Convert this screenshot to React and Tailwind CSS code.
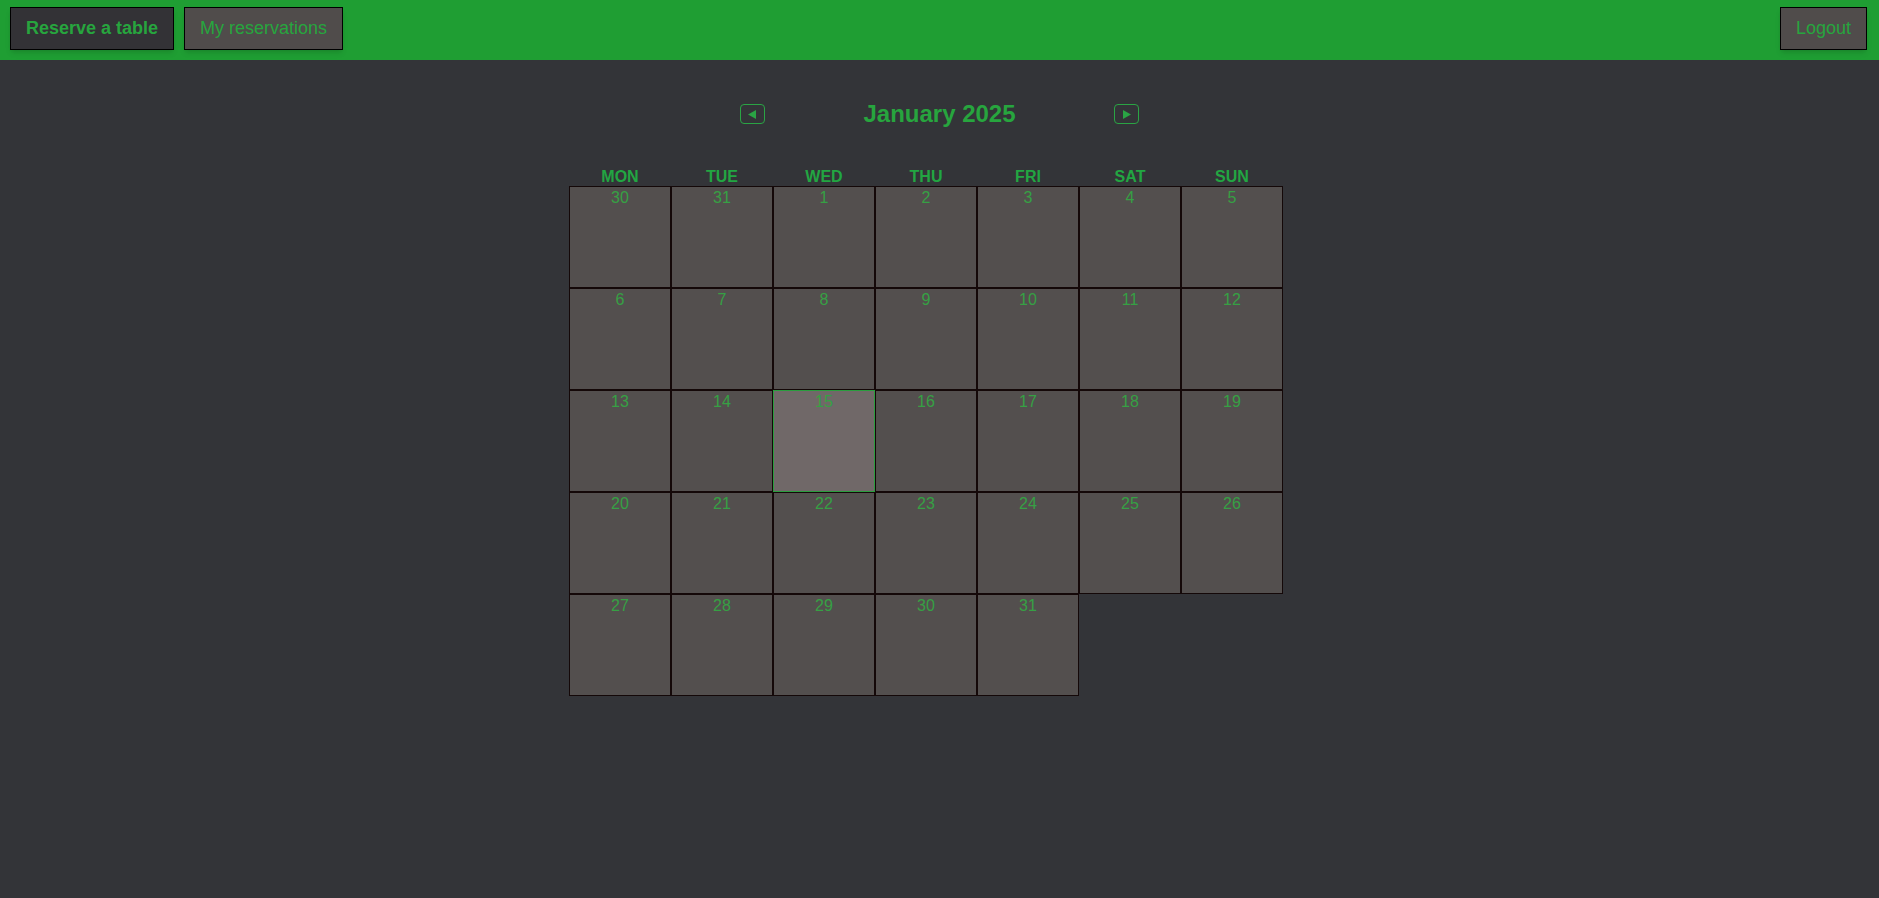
import React from 'react';

const WEEKDAYS = ['MON', 'TUE', 'WED', 'THU', 'FRI', 'SAT', 'SUN'];

function buildDays() {
  const days = [30, 31];
  for (let d = 1; d <= 31; d++) days.push(d);
  return days;
}

function NavArrow({ dir }) {
  return (
    <button className="w-[25px] h-[20px] rounded-[4px] border border-[#2aa444] flex items-center justify-center bg-transparent">
      <svg width="9" height="9" viewBox="0 0 9 9">
        {dir === 'left' ? (
          <polygon points="8,0 8,9 0,4.5" fill="#2aa444" />
        ) : (
          <polygon points="1,0 1,9 9,4.5" fill="#2aa444" />
        )}
      </svg>
    </button>
  );
}

export default function App() {
  const days = buildDays();

  return (
    <div className="min-h-screen bg-[#333438] font-['Liberation_Sans',Arial,sans-serif]">
      {/* Top bar */}
      <header className="h-[60px] bg-[#1f9e33] flex items-start pt-[7px] pl-[10px] pr-[12px]">
        <button className="w-[164px] h-[43px] bg-[#333236] border border-black text-[18px] font-bold text-[#27a53e] shadow-md">
          Reserve a table
        </button>
        <button className="w-[159px] h-[43px] ml-[10px] bg-[#504c4b] border border-black text-[18px] text-[#27a53e] shadow-md">
          My reservations
        </button>
        <button className="w-[87px] h-[43px] ml-auto bg-[#504c4b] border border-black text-[18px] text-[#27a53e] shadow-md">
          Logout
        </button>
      </header>

      {/* Month navigation */}
      <div className="mt-[40px] flex items-center justify-center">
        <NavArrow dir="left" />
        <h1 className="w-[349px] text-center text-[24px] font-bold text-[#27a53e] leading-[28px]">January 2025</h1>
        <NavArrow dir="right" />
      </div>

      {/* Calendar */}
      <div className="w-[741px] mx-auto mt-[39px]">
        <div className="grid grid-cols-[repeat(7,102px)]">
          {WEEKDAYS.map((w) => (
            <div key={w} className="h-[19px] leading-[19px] text-center text-[16px] font-bold text-[#22a642]">
              {w}
            </div>
          ))}
        </div>
        <div className="grid grid-cols-[repeat(7,102px)]">
          {days.map((d, i) => {
            const selected = i === 16;
            return (
              <div
                key={i}
                className={`box-border h-[102px] border pt-[2px] text-center text-[16px] leading-[18px] text-[#36a044] ${
                  selected ? 'bg-[#706868] border-[#2a9d3e]' : 'bg-[#534f4e] border-[#140808]'
                }`}
              >
                {d}
              </div>
            );
          })}
        </div>
      </div>
    </div>
  );
}
